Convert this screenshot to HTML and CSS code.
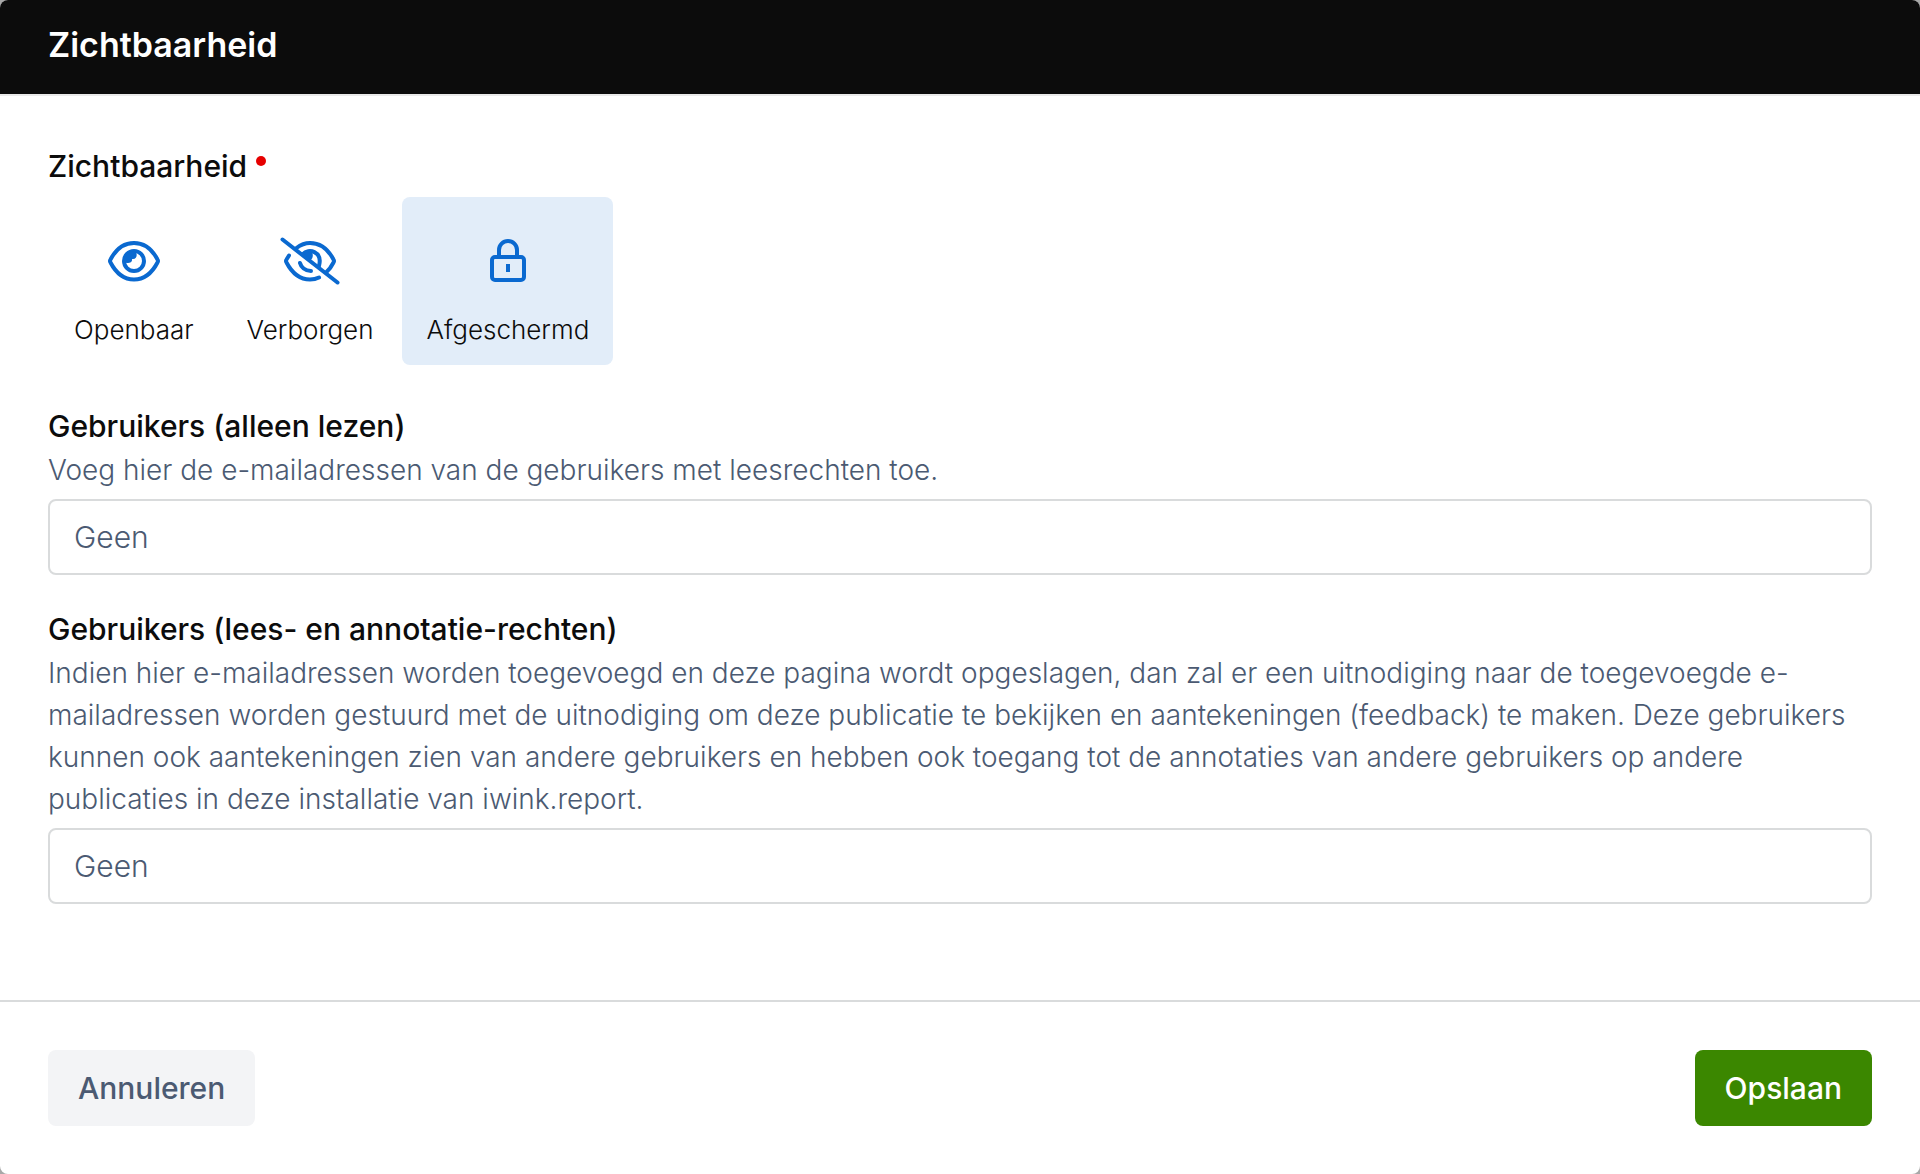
FILE: index.html
```html
<!DOCTYPE html>
<html lang="nl">
<head>
  <meta charset="UTF-8" />
  <meta name="viewport" content="width=device-width, initial-scale=1" />
  <title>Zichtbaarheid</title>
  <link rel="stylesheet" href="styles.css">
</head>
<body>
  <form class="modal">
    <header class="modal-header">
      <h1>Zichtbaarheid</h1>
    </header>

    <main class="modal-body">
      <fieldset class="visibility">
        <legend>Zichtbaarheid <span class="required"></span></legend>
        <div class="options">
          <label class="option">
            <input type="radio" name="visibility" value="public" />
            <svg class="icon" viewBox="0 0 60 48" aria-hidden="true">
              <path d="M6.500 22.500C12 12 20 6 30 6s18 6 23.500 16.500q1 1.500 0 3C48 36 40 42.500 30 42.500S12 36 6.500 25.500q-1-1.500 0-3Z" />
              <circle cx="30" cy="24" r="10" />
              <path class="fill" d="M30 14a10 10 0 0 0-10 10c1 3 9 3 8-2 5 1 6-5 3-8Z" />
            </svg>
            <span>Openbaar</span>
          </label>
          <label class="option">
            <input type="radio" name="visibility" value="hidden" />
            <svg class="icon" viewBox="0 0 60 48" aria-hidden="true">
              <path d="M16.500 11C21 7.500 25 6 30 6c10 0 18 6 23.500 16.500q1 1.500 0 3-3 6-7 9.500" />
              <path d="M9 18.500L6.500 22.500q-1 1.500 0 3C12 36 20 42.500 30 42.500c3 0 6-.5 9-2" />
              <path d="M23 17c5-6 20-3 16 12M20 26c1 4 5 8 11 8" />
              <path class="fill" d="M22 16c3-3 6-3 9-2 3 3 2 8-1 9Z" />
              <path d="M2.500 2.500L57.500 45.500" />
            </svg>
            <span>Verborgen</span>
          </label>
          <label class="option">
            <input type="radio" name="visibility" value="protected" checked />
            <svg class="icon" viewBox="0 0 60 48" aria-hidden="true">
              <rect x="14" y="20" width="32" height="23" rx="3" />
              <path d="M21 20V13a9 9 0 0 1 18 0V20" />
              <path class="slot" d="M30 27V35" />
            </svg>
            <span>Afgeschermd</span>
          </label>
        </div>
      </fieldset>

      <div class="field">
        <label for="readers">Gebruikers (alleen lezen)</label>
        <p id="readers-help">Voeg hier de e-mailadressen van de gebruikers met leesrechten toe.</p>
        <input type="text" id="readers" placeholder="Geen" aria-describedby="readers-help" />
      </div>

      <div class="field">
        <label for="annotators">Gebruikers (lees- en annotatie-rechten)</label>
        <p id="annotators-help">Indien hier e-mailadressen worden toegevoegd en deze pagina wordt opgeslagen, dan zal er een uitnodiging naar de toegevoegde e-mailadressen worden gestuurd met de uitnodiging om deze publicatie te bekijken en aantekeningen (feedback) te maken. Deze gebruikers kunnen ook aantekeningen zien van andere gebruikers en hebben ook toegang tot de annotaties van andere gebruikers op andere publicaties in deze installatie van iwink.report.</p>
        <input type="text" id="annotators" placeholder="Geen" aria-describedby="annotators-help" />
      </div>
    </main>

    <footer class="modal-footer">
      <button type="button" class="btn">Annuleren</button>
      <button type="submit" class="btn btn-primary">Opslaan</button>
    </footer>
  </form>
</body>
</html>
```
FILE: styles.css
```css
:root {
  --text: #0c0c0c;
  --subtext: #4b5a72;
  --border: #d9dbdc;
  --accent: #0a69d0;
  --accent-bg: #e2edf9;
  --green: #3b8700;
  --radius: 8px;
}

*, *::before, *::after {
  box-sizing: border-box;
  margin: 0;
  padding: 0;
}

body {
  font-family: Inter, sans-serif;
  font-size: 28px;
  font-weight: 350;
  line-height: 42px;
  background: #a8a8a8;
  color: var(--text);
}

.modal {
  display: flex;
  flex-direction: column;
  min-height: 100vh;
  background: #fff;
  border-radius: var(--radius);
  overflow: hidden;
}

.modal-header {
  padding: 24px 48px 28px;
  background: var(--text);
  border-bottom: 2px solid #eaeaea;
  color: #fff;
}

.modal-header h1 {
  font-size: 34px;
  font-weight: 600;
}

.modal-body {
  flex: 1;
  display: flex;
  flex-direction: column;
  gap: 32px;
  padding: 48px;
}

.visibility {
  border: none;
  margin-bottom: 7px;
}

.visibility legend,
.field label {
  display: block;
  font-size: 30px;
  font-weight: 500;
  line-height: 44px;
}

.field label {
  margin-bottom: 1px;
  font-weight: 550;
}

.required {
  display: inline-block;
  width: 10px;
  height: 10px;
  margin-left: 1px;
  border-radius: 50%;
  background: #e60000;
  vertical-align: 11px;
}

.options {
  display: flex;
  gap: 5px;
  margin-top: 9px;
  padding-left: 2px;
}

.option {
  display: flex;
  flex-direction: column;
  align-items: center;
  gap: 24px;
  padding: 40px 24px 14px;
  border-radius: var(--radius);
  font-size: 26px;
  cursor: pointer;
}

.option input {
  position: absolute;
  opacity: 0;
}

.option:has(input:checked) {
  background: var(--accent-bg);
}

.icon {
  width: 60px;
  height: 48px;
  fill: none;
  stroke: var(--accent);
  stroke-width: 4;
  stroke-linecap: round;
  stroke-linejoin: round;
}

.icon .fill {
  fill: var(--accent);
  stroke: none;
}

.icon .slot {
  stroke-linecap: butt;
}

.field p {
  color: var(--subtext);
}

.field input {
  display: block;
  width: 100%;
  height: 76px;
  margin-top: 8px;
  padding: 0 24px;
  border: 2px solid var(--border);
  border-radius: var(--radius);
  font-family: inherit;
  font-size: 30px;
  font-weight: inherit;
  color: var(--text);
}

.field input::placeholder {
  color: var(--subtext);
}

.modal-footer {
  display: flex;
  justify-content: space-between;
  padding: 48px;
  border-top: 2px solid var(--border);
}

.btn {
  height: 76px;
  padding: 0 30px;
  border: none;
  border-radius: var(--radius);
  background: #f3f4f6;
  color: var(--subtext);
  font-family: inherit;
  font-size: 30px;
  font-weight: 500;
  cursor: pointer;
}

.btn-primary {
  background: var(--green);
  color: #fff;
}
```
